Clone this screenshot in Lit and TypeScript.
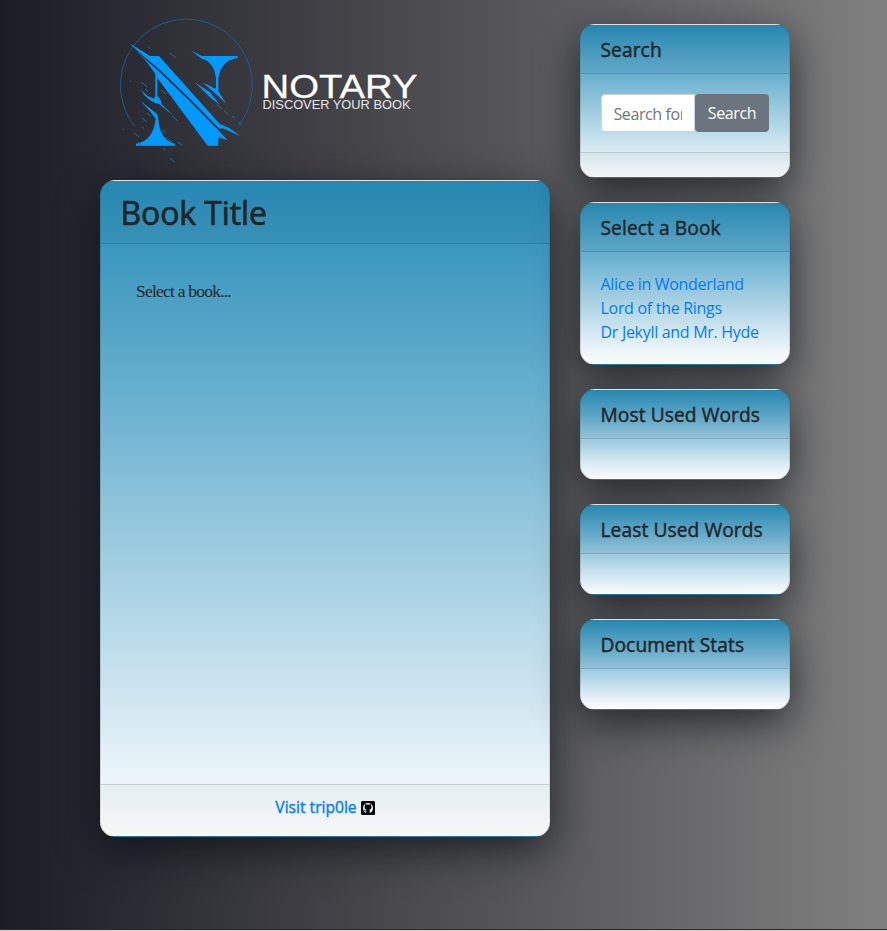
import { LitElement, html, css, svg } from "lit";
import { customElement } from "lit/decorators.js";

const BOOKS = ["Alice in Wonderland", "Lord of the Rings", "Dr Jekyll and Mr. Hyde"];

// [x, y, length] of the thin diagonal flecks around the emblem
const FLECKS: [number, number, number][] = [
  [38, 37, 2], [49, 53, 1], [60, 43, 6], [31, 72, 6], [35, 79, 3], [51, 80, 5], [59, 84, 4],
  [55, 98, 4], [62, 106, 6], [32, 108, 5], [24, 123, 5], [28, 132, 3], [52, 120, 4],
  [55, 127, 5], [60, 131, 4], [68, 132, 4], [53, 138, 3], [60, 148, 5], [32, 117, 2],
  [20, 71, 1], [13, 119, 1], [37, 103, 4], [106, 94, 6], [114, 101, 4], [122, 106, 3], [128, 112, 4],
];

const logo = svg`
  <path d="M25 116.500 A66 66 0 1 1 129 115" fill="none" stroke="#1f5a8a" stroke-width="1"/>
  <g fill="#0099ff" transform="scale(0.33333)">
    <path d="M58 99 L120 138 H147 L330 343 Q350 346 392 379 L338 355 L328 356 L240 266 L150 180 L100 138 Z"/>
    <path d="M66 108 L102 145 L150 187 L236 271 L322 358 L353 391 L325 382 V407 H293 L145 208 L132 186 L112 158 Z"/>
    <path d="M242 121 L275 138 H383 V144 Q332 152 325 205 V244 L349 281 L318 252 L277 217 L318 237 V205 Q312 155 275 146 Z"/>
    <path d="M254 217 L300 247 L330 285 L300 262 Z"/>
    <path d="M136 188 L142 196 V258 Q155 268 154 282 L192 319 L146 281 Q128 282 100 252 L132 266 L136 258 Z"/>
    <path d="M91 272 L141 312 L145 326 Q150 392 195 401 V407 H78 V401 Q130 392 137 326 L120 304 Z"/>
    <path d="M92 238 L114 260 L104 257 Z"/>
  </g>
  <g stroke="#1272ba" stroke-width="0.900">
    ${FLECKS.map(([x, y, l]) => svg`<line x1=${x} y1=${y} x2=${x + l} y2=${y + l * 0.8}/>`)}
  </g>
  <g font-family="'Liberation Sans', sans-serif">
    <text x="151.500" y="88" font-size="34" textLength="156" lengthAdjust="spacingAndGlyphs" fill="#fff" stroke="#fff" stroke-width="0.300">NOTARY</text>
    <text x="152.500" y="98.700" font-size="12" textLength="148" lengthAdjust="spacingAndGlyphs" fill="#e6e6e8">DISCOVER YOUR BOOK</text>
  </g>`;

@customElement("app-root")
export class AppRoot extends LitElement {
  static styles = css`
    :host {
      display: block;
      box-sizing: border-box;
      height: 931px;
      overflow: hidden;
      font: 400 16px/24px "Open Sans", "Noto Sans", sans-serif;
      color: #212529;
      background: linear-gradient(90deg, #1c1c25, #808080);
      border-bottom: 1px solid #d8cfc4;
    }
    * { box-sizing: border-box; }
    .page {
      display: grid;
      grid-template-columns: 450px 210px;
      column-gap: 30px;
      padding-left: 100px;
      align-items: start;
      height: 930px;
      border-bottom: 1px solid #30282a;
    }
    .logo { display: block; width: 330px; height: 160px; margin: 10px 0 10px 10px; overflow: visible; }
    .side { display: flex; flex-direction: column; gap: 24px; padding-top: 24px; }
    .card {
      display: flex;
      flex-direction: column;
      border: 1px solid rgba(0, 0, 0, 0.125);
      border-radius: 15px;
      background-image: linear-gradient(#288cb6, #69b0cf 33%, #fff);
      box-shadow: 0 13px 42px rgba(5, 10, 13, 0.68);
    }
    .head {
      height: 49px;
      padding: 13px 19.500px 0;
      border-bottom: 1px solid rgba(0, 0, 0, 0.125);
      background: rgba(0, 0, 0, 0.03);
      border-radius: 14px 14px 0 0;
      -webkit-text-stroke: 0.45px #212529;
      font-size: 19.200px;
      letter-spacing: 0.08px;
      white-space: nowrap;
    }
    .foot {
      border-top: 1px solid rgba(0, 0, 0, 0.125);
      background: rgba(0, 0, 0, 0.03);
      border-radius: 0 0 14px 14px;
    }
    .main { height: 657px; }
    .main .head {
      height: 63px; font-size: 32px; line-height: 38px; letter-spacing: -0.1px;
      -webkit-text-stroke-width: 0.7px;
    }
    .reading {
      flex: 1; padding: 35px 35px;
      font: 17.500px/24px "Liberation Serif", serif; letter-spacing: -0.78px;
    }
    .main .foot {
      height: 52px; padding-top: 10px; text-align: center; color: #007bff;
      font-size: 15.600px; -webkit-text-stroke: 0.35px #007bff;
    }
    .github { width: 14px; height: 14px; vertical-align: -2px; }
    .search { height: 154px; }
    .search form { flex: 1; display: flex; padding: 20px; }
    .search input {
      width: 94px; height: 38px; padding: 8px 12px 6px 11.500px; border: 1px solid #ced4da;
      border-radius: 4px 0 0 4px; background: #fff; font: inherit; min-width: 0; letter-spacing: -0.4px;
    }
    input::placeholder { color: #6c757d; opacity: 1; }
    button {
      width: 74px; height: 38px; padding: 0; border: 0; border-radius: 4px;
      background: #6c757d; color: #fff; font: inherit; letter-spacing: -0.4px;
    }
    .search .foot { height: 25px; }
    .books { height: 163px; }
    .books ul {
      list-style: none; margin: 0; padding: 20px 19.500px; color: #007bff;
      white-space: nowrap; letter-spacing: -0.3px;
    }
    .empty { height: 91px; }
  `;

  render() {
    return html`
      <div class="page">
        <main>
          <svg class="logo" viewBox="0 0 330 160">${logo}</svg>
          <section class="card main">
            <div class="head">Book Title</div>
            <div class="reading">Select a book...</div>
            <div class="foot">
              Visit trip0le
              <svg class="github" viewBox="0 0 14 14">
                <rect width="14" height="14" rx="1.500" fill="#000"/>
                <path fill="#f2f4f5" d="M5.300 12 V10.300 Q3.800 10.600 3.300 9.400 Q2.900 8.700 2.500 8.500 Q3.500 8.300 4 9.200 Q4.500 9.800 5.300 9.500 L5.700 8.800 Q3.500 8.500 3.500 6.200 Q3.500 5.300 4.100 4.600 Q3.800 3.800 4.200 3.100 Q5 3.200 5.600 3.700 Q7 3.300 8.400 3.700 Q9 3.200 9.800 3.100 Q10.200 3.800 9.900 4.600 Q10.500 5.300 10.500 6.200 Q10.500 8.500 8.300 8.800 Q8.700 9.200 8.700 10 V12 Q12 11 12 7 A5 5 0 1 0 2 7 Q2 11 5.300 12Z"/>
              </svg>
            </div>
          </section>
        </main>
        <aside class="side">
          <section class="card search">
            <div class="head">Search</div>
            <form>
              <input placeholder="Search for..." />
              <button type="button">Search</button>
            </form>
            <div class="foot"></div>
          </section>
          <section class="card books">
            <div class="head">Select a Book</div>
            <ul>${BOOKS.map((b) => html`<li>${b}</li>`)}</ul>
          </section>
          ${["Most Used Words", "Least Used Words", "Document Stats"].map(
            (t) => html`<section class="card empty"><div class="head">${t}</div></section>`,
          )}
        </aside>
      </div>
    `;
  }
}
